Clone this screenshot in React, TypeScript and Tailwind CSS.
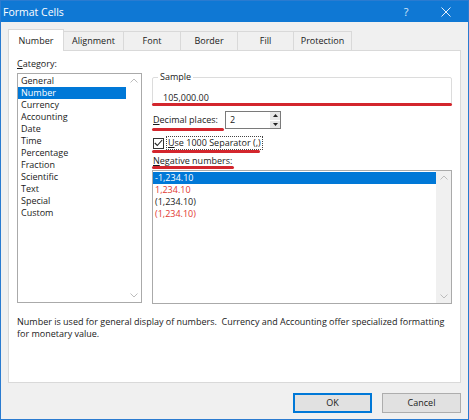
import clsx from 'clsx';

const categories = [
  'General',
  'Number',
  'Currency',
  'Accounting',
  'Date',
  'Time',
  'Percentage',
  'Fraction',
  'Scientific',
  'Text',
  'Special',
  'Custom',
];

const negatives = [
  { label: '-1,234.10', red: false },
  { label: '1,234.10', red: true },
  { label: '(1,234.10)', red: false },
  { label: '(1,234.10)', red: true },
];

const tabs = [
  { label: 'Number', w: 'w-[56px]' },
  { label: 'Alignment', w: 'w-[60px]' },
  { label: 'Font', w: 'w-[57px]' },
  { label: 'Border', w: 'w-[57px]' },
  { label: 'Fill', w: 'w-[56px]' },
  { label: 'Protection', w: 'w-[58px]' },
];

function Chevron({ up }: { up?: boolean }) {
  return (
    <svg width="8" height="5" viewBox="0 0 8 5" className={clsx(!up && 'rotate-180')}>
      <path d="M0.5 4.5 L4 1 L7.5 4.5" fill="none" stroke="#bcbcbc" strokeWidth="1" />
    </svg>
  );
}

// red annotation stroke drawn over the dialog
function RedMark({ className }: { className: string }) {
  return <div className={clsx('absolute h-[3px] rounded-full bg-[#d3262d]', className)} />;
}

export default function App() {
  return (
    <div className="w-[469px] h-[420px] flex flex-col border border-[#2a7bd0] font-['Open_Sans',sans-serif] text-[9px] leading-[12px] text-[#1a1a1a] overflow-hidden">
      {/* Title bar */}
      <div className="h-[21px] shrink-0 bg-[#0f78d4] flex items-center justify-between pl-[2px] text-white">
        <span className="text-[10.5px]">Format Cells</span>
        <div className="flex items-center">
          <span className="w-[20px] mr-[8px] text-center text-[11px] text-[#d6e8fa]">?</span>
          <span className="w-[44px] flex justify-center">
            <svg width="10" height="10" viewBox="0 0 10 10">
              <path d="M0.5 0.5 L9.5 9.5 M9.5 0.5 L0.5 9.5" stroke="#e6f0fb" strokeWidth="1" />
            </svg>
          </span>
        </div>
      </div>

      <div className="flex-1 bg-[#f0f0f0] px-[7px] pt-[7px] flex flex-col">
        {/* Tabs */}
        <div className="flex items-end h-[21px]">
          {tabs.map((t, i) =>
            i === 0 ? (
              <div
                key={t.label}
                className={clsx(
                  t.w,
                  'h-[22px] -mb-px relative z-10 bg-white border border-b-0 border-[#d9d9d9] flex items-center justify-center'
                )}
              >
                {t.label}
              </div>
            ) : (
              <div
                key={t.label}
                className={clsx(
                  t.w,
                  'h-[19px] bg-[#f0f0f0] border border-l-0 border-b-0 border-[#d9d9d9] flex items-center justify-center'
                )}
              >
                {t.label}
              </div>
            )
          )}
        </div>

        {/* Panel */}
        <div className="h-[333px] bg-white border border-[#d9d9d9] pl-[8px] pr-[7px] pt-[7px] flex flex-col">
          <div className="flex gap-[10px]">
            {/* Category */}
            <div className="flex flex-col w-[125px]">
              <div>
                <span className="underline underline-offset-1">C</span>ategory:
              </div>
              <div className="mt-[3px] h-[230px] border border-[#aaaaaa] flex">
                <div className="flex-1 pt-px">
                  {categories.map((c) => (
                    <div
                      key={c}
                      className={clsx(
                        'h-[12px] pl-[3px]',
                        c === 'Number' && 'bg-[#0078d7] text-white'
                      )}
                    >
                      {c}
                    </div>
                  ))}
                </div>
                <div className="w-[15px] flex flex-col justify-between items-center py-[4px]">
                  <Chevron up />
                  <Chevron />
                </div>
              </div>
            </div>

            {/* Right column */}
            <div className="w-[300px] mt-[13px] flex flex-col">
              <div className="relative">
                <fieldset className="border border-[#dcdcdc] rounded-[2px] pl-[5px] pt-[9px]">
                  <legend className="px-[2px]">Sample</legend>
                  <div className="pl-[5px]">105,000.00</div>
                </fieldset>
                <RedMark className="left-0 right-0 -bottom-[1px]" />
              </div>

              <div className="mt-[6px] flex items-center">
                <div className="relative w-[73px] pl-px whitespace-nowrap">
                  <span className="underline underline-offset-1">D</span>ecimal places:
                  <RedMark className="left-0 w-[72px] -bottom-[5px]" />
                </div>
                <div className="w-[56px] h-[18px] border border-[#7a7a7a] flex">
                  <div className="flex-1 pl-[4px] flex items-center">2</div>
                  <div className="w-[10px] flex flex-col gap-px">
                    <div className="flex-1 bg-[#e6e6e6] flex items-center justify-center">
                      <svg width="5" height="3" viewBox="0 0 5 3">
                        <path d="M0 3 L2.5 0 L5 3 Z" fill="#222" />
                      </svg>
                    </div>
                    <div className="flex-1 bg-[#e6e6e6] flex items-center justify-center">
                      <svg width="5" height="3" viewBox="0 0 5 3">
                        <path d="M0 0 L2.5 3 L5 0 Z" fill="#222" />
                      </svg>
                    </div>
                  </div>
                </div>
              </div>

              <div className="mt-[7px] relative flex items-center">
                <div className="ml-px w-[11px] h-[11px] border border-[#333] bg-white flex items-center justify-center">
                  <svg width="9" height="8" viewBox="0 0 9 8">
                    <path d="M0.8 4 L3.3 6.5 L8.2 1" fill="none" stroke="#222" strokeWidth="1.1" />
                  </svg>
                </div>
                <div className="ml-[2px] h-[14px] px-px border border-dotted border-[#444] flex items-center whitespace-nowrap">
                  <span className="underline underline-offset-1">U</span>se 1000 Separator (,)
                </div>
                <RedMark className="left-0 w-[108px] -bottom-[3px]" />
              </div>

              <div className="mt-[5px] relative self-start pl-px pr-[2px] whitespace-nowrap">
                <span className="underline underline-offset-1">N</span>egative numbers:
                <RedMark className="left-0 right-0 -bottom-[2px]" />
              </div>

              <div className="mt-[3px] h-[134px] border border-[#aaaaaa] flex">
                <div className="flex-1 pt-px">
                  {negatives.map((n, i) => (
                    <div
                      key={i}
                      className={clsx(
                        'h-[12px] pl-[2px]',
                        i === 0 ? 'bg-[#0078d7] text-white' : n.red ? 'text-[#e1372f]' : ''
                      )}
                    >
                      {n.label}
                    </div>
                  ))}
                </div>
                <div className="w-[15px] bg-[#f0f0f0] flex flex-col justify-between items-center py-[4px]">
                  <Chevron up />
                  <Chevron />
                </div>
              </div>
            </div>
          </div>

          <p className="mt-[12px] w-[440px]">
            Number is used for general display of numbers.&nbsp; Currency and Accounting offer specialized formatting
            for monetary value.
          </p>
        </div>

        {/* Buttons */}
        <div className="mt-[10px] flex justify-end gap-[10px]">
          <button className="w-[79px] h-[20px] bg-[#e1e1e1] border-2 border-[#0078d7] flex items-center justify-center">
            OK
          </button>
          <button className="w-[79px] h-[20px] bg-[#e1e1e1] border border-[#adadad] flex items-center justify-center">
            Cancel
          </button>
        </div>
      </div>
    </div>
  );
}
